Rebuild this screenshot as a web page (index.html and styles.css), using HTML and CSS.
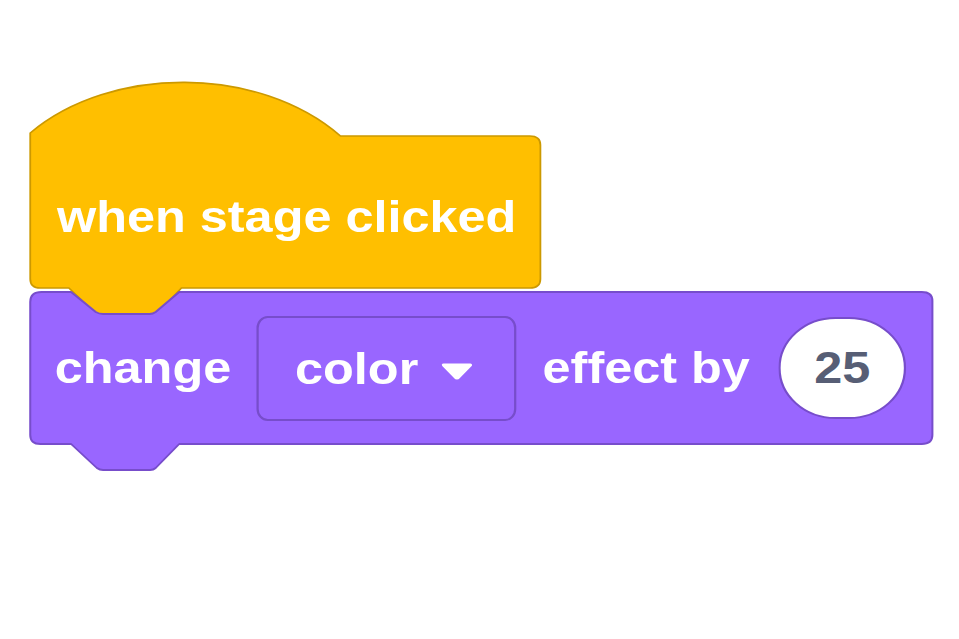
FILE: index.html
```html
<!DOCTYPE html>
<html lang="en">
<head>
<meta charset="utf-8">
<title>when stage clicked</title>
<link rel="stylesheet" href="styles.css">
</head>
<body>
<div class="scene">
  <div class="stack">
    <div class="block hat">
      <svg class="shape" width="458" height="236" viewBox="0 0 458 236" aria-hidden="true">
        <path class="hat-path" d="M 1,51 C 73,-17 205,-17 278,54 L 447,54 Q 456.5,54 456.5,63 L 456.5,197 Q 456.5,206 447,206 L 136,206 L 114,232 Q 112,235 109,235 L 65,235 Q 62,235 60,232 L 35.5,206 L 10,206 Q 1,206 1,197 Z"/>
      </svg>
      <span class="label">when stage clicked</span>
    </div>
    <div class="block cmd">
      <svg class="shape" width="808" height="181" viewBox="0 0 808 181" aria-hidden="true">
        <path class="cmd-path" d="M 1,11 Q 1,1 11,1 L 37.5,1 L 59.5,21 Q 62.5,23 66,23 L 107.5,23 Q 110.5,23 113,21 L 134,1 L 797,1 Q 806.5,1 806.5,10 L 806.5,144 Q 806.5,153 797,153 L 134,153 L 113,177 Q 111,179 108,179 L 66,179 Q 63,179 60.5,177 L 37.5,153 L 10,153 Q 1,153 1,144 Z"/>
      </svg>
      <span class="label">change</span>
      <div class="dropdown">
        <span class="label">color</span>
        <svg class="arrow" width="30" height="19" viewBox="0 0 30 19" aria-hidden="true">
          <path d="M 3,3 L 27,3 L 16.5,15 Q 15,17 13.5,15 Z"/>
        </svg>
      </div>
      <span class="label">effect by</span>
      <div class="number"><span class="num-text">25</span></div>
    </div>
  </div>
</div>
</body>
</html>
```

FILE: styles.css
```css
html, body {
  margin: 0;
  padding: 0;
  background: #ffffff;
}

body {
  width: 959px;
  height: 639px;
  overflow: hidden;
  font-family: "Liberation Sans", Arial, Helvetica, sans-serif;
}

.scene {
  box-sizing: border-box;
  width: 856px;
  transform: scaleX(1.12);
  transform-origin: 0 0;
  padding: 82px 0 0 25.9px;
}

.stack {
  display: flex;
  flex-direction: column;
  align-items: flex-start;
}

.block {
  position: relative;
  box-sizing: border-box;
}

.shape {
  position: absolute;
  left: 0;
  top: 0;
  overflow: visible;
  z-index: 0;
}

.hat-path {
  fill: #FFBF00;
  stroke: #CC9900;
  stroke-width: 1.6;
  stroke-linejoin: round;
}

.cmd-path {
  fill: #9966FF;
  stroke: #774DCB;
  stroke-width: 1.8;
  stroke-linejoin: round;
}

.label {
  position: relative;
  z-index: 1;
  color: #ffffff;
  font-weight: 700;
  font-size: 45px;
  line-height: 50px;
  white-space: nowrap;
}

.hat {
  width: 458px;
  height: 206px;
  padding: 110px 0 0 25px;
}

.cmd {
  width: 808px;
  height: 154px;
  margin-top: 3px;
  padding: 0 23px;
  display: flex;
  align-items: center;
  gap: 23px;
}

.dropdown {
  position: relative;
  z-index: 1;
  box-sizing: border-box;
  width: 232px;
  height: 105px;
  border: 2px solid #774DCB;
  border-radius: 10px / 12px;
  background: #9966FF;
  display: flex;
  align-items: center;
  gap: 20px;
  padding: 0 35px 0 32px;
  margin-top: 1px;
}

.arrow {
  margin-top: 6px;
  flex: none;
}

.arrow path {
  fill: #ffffff;
  stroke: #ffffff;
  stroke-width: 3;
  stroke-linejoin: round;
}

.number {
  position: relative;
  z-index: 1;
  box-sizing: border-box;
  width: 114px;
  height: 102px;
  margin-left: 2.5px;
  border: 2px solid #774DCB;
  border-radius: 51px;
  background: #ffffff;
  display: flex;
  align-items: center;
  justify-content: center;
}

.num-text {
  color: #575E75;
  font-weight: 700;
  font-size: 45px;
  line-height: 50px;
}
```
